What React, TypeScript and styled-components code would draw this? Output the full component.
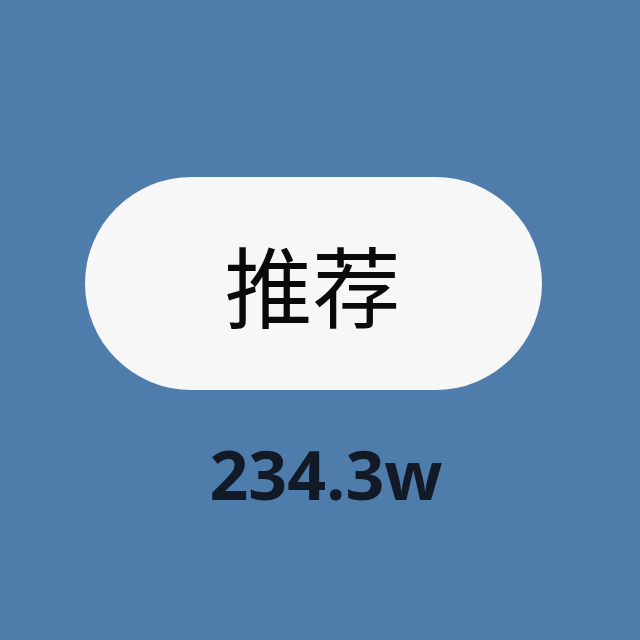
import React from "react";
import styled, { createGlobalStyle } from "styled-components";

const Global = createGlobalStyle`
  html, body { margin: 0; padding: 0; background: #4f7dab; }
  #root { width: 640px; height: 640px; }
`;

const Page = styled.div`
  width: 640px;
  height: 640px;
  box-sizing: border-box;
  background: #4f7dab;
  display: flex;
  flex-direction: column;
  align-items: flex-start;
  padding-top: 177px;
`;

const Pill = styled.div`
  margin-left: 85px;
  width: 457px;
  height: 213px;
  border-radius: 107px;
  background: #f7f7f7;
  display: flex;
  align-items: center;
  justify-content: center;
`;

const Label = styled.span`
  font-family: "Noto Sans CJK SC", "Noto Sans", sans-serif;
  font-size: 88px;
  font-weight: 400;
  line-height: 1;
  color: #0a0a0a;
  margin-left: -2px;
  margin-top: -2px;
`;

const Count = styled.div`
  margin-top: 50px;
  width: 640px;
  text-align: center;
  padding-left: 12px;
  box-sizing: border-box;
  font-family: "Open Sans", "Noto Sans", sans-serif;
  font-weight: 700;
  font-size: 68px;
  line-height: 1;
  color: #111a26;
`;

export default function App() {
  return (
    <>
      <Global />
      <Page>
        <Pill>
          <Label>推荐</Label>
        </Pill>
        <Count>234.3w</Count>
      </Page>
    </>
  );
}
